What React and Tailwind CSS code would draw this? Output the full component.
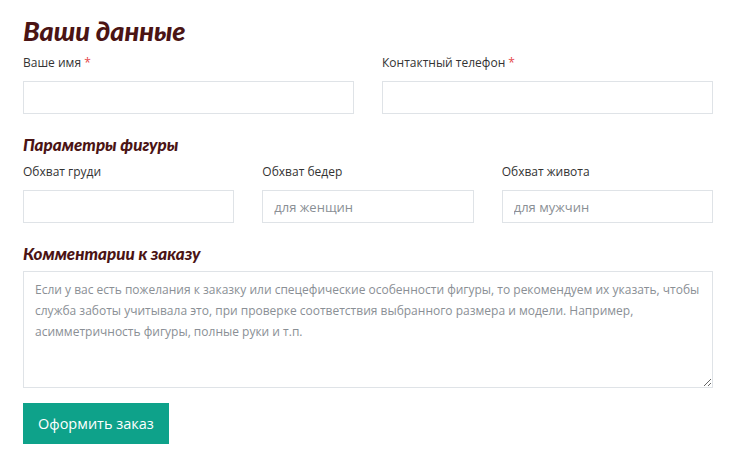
import React from "react";

const fields = [
    {label: "Обхват груди", placeholder: ""},
    {label: "Обхват бедер", placeholder: "для женщин"},
    {label: "Обхват живота", placeholder: "для мужчин"},
]

function Label({children, required}){
    return (
        <label className="block text-[12px] leading-[16px] text-[#333] mb-[10px] font-['Open_Sans',sans-serif]">
            {children}
            {required && <span className="text-[#e5474b]"> *</span>}
        </label>
    )
}

export default function App(){
    const input = "block w-full h-[33px] border border-[#dfe3e7] bg-white px-[11px] text-[13px] font-['Open_Sans',sans-serif] placeholder:text-[#8a8f95] outline-none";

    return (
        <div className="w-[752px] h-[470px] bg-white px-[23px] pt-[14px] font-['Open_Sans',sans-serif]">
            <div className="w-[690px]">
                <h1 className="font-['Lato',sans-serif] italic font-black text-[27px] leading-[34px] text-[#4b1414]">Ваши данные</h1>
                <div className="grid grid-cols-2 gap-[28px] mt-[7px]">
                    <div>
                        <Label required>Ваше имя</Label>
                        <input type="text" className={input} />
                    </div>
                    <div>
                        <Label required>Контактный телефон</Label>
                        <input type="text" className={input} />
                    </div>
                </div>

                <h2 className="font-['Lato',sans-serif] italic font-black text-[17px] leading-[22px] text-[#4b1414] mt-[20px]">Параметры фигуры</h2>
                <div className="grid grid-cols-3 gap-[28px] mt-[8px]">
                    {fields.map(f => (
                        <div key={f.label}>
                            <Label>{f.label}</Label>
                            <input type="text" placeholder={f.placeholder} className={input} />
                        </div>
                    ))}
                </div>

                <h2 className="font-['Lato',sans-serif] italic font-black text-[17px] leading-[22px] text-[#4b1414] mt-[20px]">Комментарии к заказу</h2>
                <textarea
                    className="block w-full h-[117px] mt-[6px] border border-[#dfe3e7] px-[11px] py-[7px] text-[12px] leading-[21px] font-['Open_Sans',sans-serif] placeholder:text-[#8a8f95] outline-none"
                    placeholder="Если у вас есть пожелания к заказку или спецефические особенности фигуры, то рекомендуем их указать, чтобы служба заботы учитывала это, при проверке соответствия выбранного размера и модели. Например, асимметричность фигуры, полные руки и т.п."
                />
                <button className="mt-[15px] h-[41px] px-[15px] bg-[#0ea28a] text-white text-[14.5px] font-['Open_Sans',sans-serif]">Оформить заказ</button>
            </div>
        </div>
    )
}
